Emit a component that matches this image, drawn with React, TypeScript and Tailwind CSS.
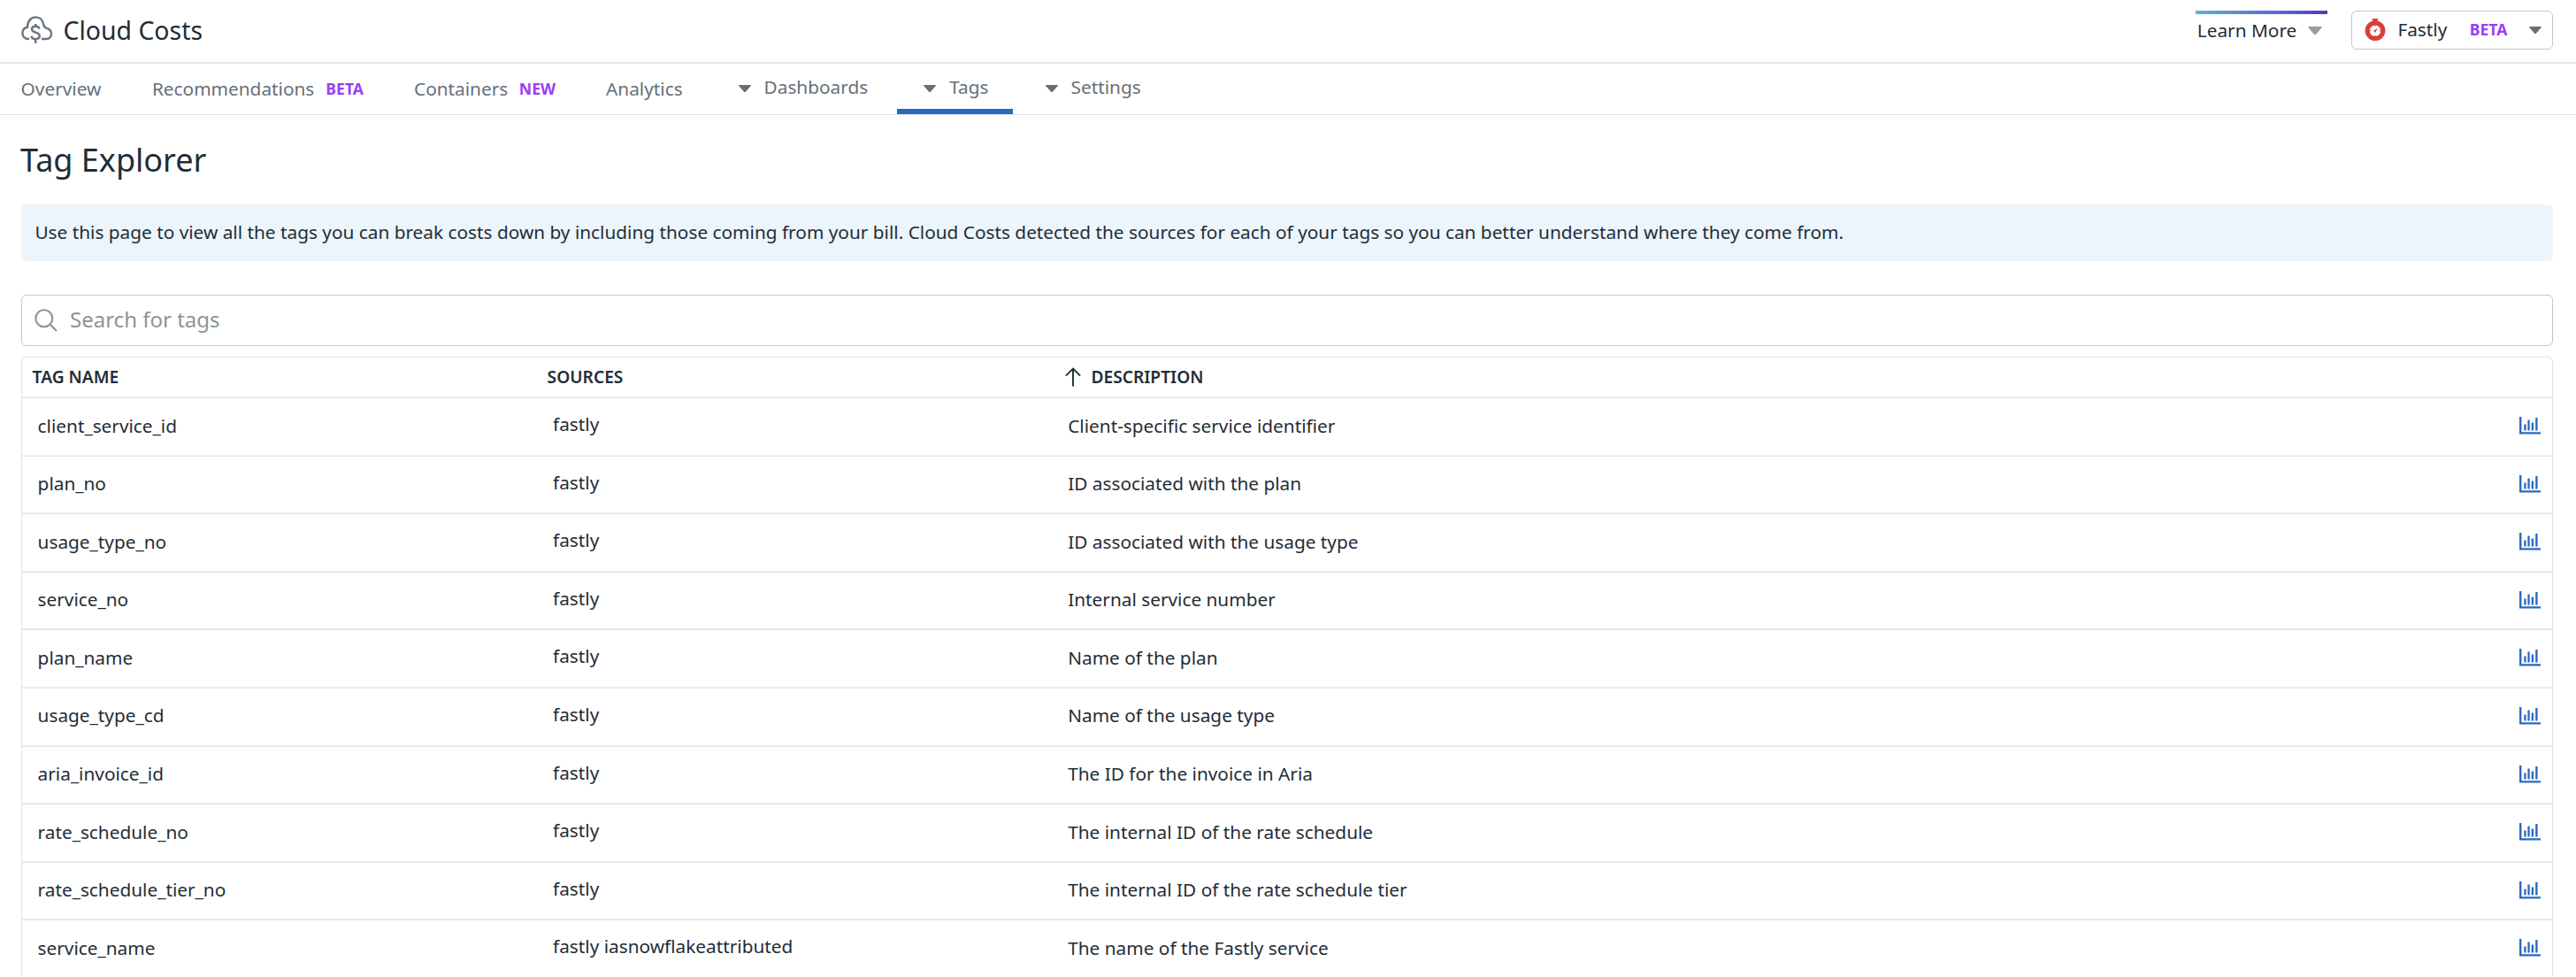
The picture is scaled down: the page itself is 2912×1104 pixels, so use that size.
import type { ReactNode } from "react";

type Tag = { name: string; sources: string; description: string };

const TAGS: Tag[] = [
  { name: "client_service_id", sources: "fastly", description: "Client-specific service identifier" },
  { name: "plan_no", sources: "fastly", description: "ID associated with the plan" },
  { name: "usage_type_no", sources: "fastly", description: "ID associated with the usage type" },
  { name: "service_no", sources: "fastly", description: "Internal service number" },
  { name: "plan_name", sources: "fastly", description: "Name of the plan" },
  { name: "usage_type_cd", sources: "fastly", description: "Name of the usage type" },
  { name: "aria_invoice_id", sources: "fastly", description: "The ID for the invoice in Aria" },
  { name: "rate_schedule_no", sources: "fastly", description: "The internal ID of the rate schedule" },
  { name: "rate_schedule_tier_no", sources: "fastly", description: "The internal ID of the rate schedule tier" },
  { name: "service_name", sources: "fastly iasnowflakeattributed", description: "The name of the Fastly service" },
];

function CloudCostIcon() {
  return (
    <svg className="h-8 w-9" viewBox="0 0 36 32" fill="none" stroke="#6c757d" strokeWidth="2.4">
      <path d="M9 26H8.2C4.2 26 1.4 23.2 1.4 19.4C1.4 16 3.8 13.4 7 12.8C7 6.2 10.8 1.4 16.2 1.4C21.2 1.4 24.4 4.8 25 9.6C25.6 11.8 26.8 13.2 28.6 13.8C32 14.6 34 17 34 20C34 23.6 31.6 26 28.4 26H23" />
      <path d="M20.6 14.6C20 12.8 18.4 11.8 16.2 11.8C13.6 11.8 12 13 12 15C12 17 13.4 17.8 16.2 18.6C19.2 19.4 20.8 20.4 20.8 22.6C20.8 24.8 18.8 26.2 16.2 26.2C13.6 26.2 11.8 25 11.4 22.8" />
      <path d="M16.2 9V12.4M16.2 26V31" />
    </svg>
  );
}

function Caret({ className }: { className: string }) {
  return (
    <svg className={className} viewBox="0 0 14 9" preserveAspectRatio="none">
      <path d="M0.8 0H13.2Q14.3 0.2 13.6 1.2L7.9 8.2Q7 9.1 6.1 8.2L0.4 1.2Q-0.3 0.2 0.8 0Z" fill="currentColor" />
    </svg>
  );
}

function StopwatchIcon() {
  return (
    <svg className="mt-[-1px] h-[25px] w-6" viewBox="0 0 24 25">
      <path d="M8.6 0H15.2V1.4H14.4V5H9.4V1.4H8.6Z" fill="#d64036" />
      <circle cx="12" cy="13.6" r="11.4" fill="#d64036" />
      <circle cx="12" cy="13.8" r="6.2" fill="#fff" />
      <path d="M12 7.4V9M12 18.8V20.2M5.6 13.8H7.2M16.8 13.8H18.4" stroke="#d64036" strokeWidth="0.9" />
      <path d="M14.8 10.8L12.8 14.6A1.2 1.2 0 1 1 11.2 13Z" fill="#d64036" />
    </svg>
  );
}

function SearchIcon() {
  return (
    <svg className="mt-[-1px] h-[26px] w-[26px]" viewBox="0 0 26 26" fill="none" stroke="#8d9399" strokeWidth="2.1">
      <circle cx="10.8" cy="10.8" r="9.5" />
      <path d="M17.4 17.4L25 25" />
    </svg>
  );
}

function ArrowUp() {
  return (
    <svg className="mt-[-1px] h-[22px] w-[18px]" viewBox="0 0 18 22" fill="none" stroke="#1f2d37" strokeWidth="1.9">
      <path d="M9 21.4V1.6M0.9 9.6L9 1.5L17.1 9.6" />
    </svg>
  );
}

function ChartIcon() {
  return (
    <svg className="mt-px h-5 w-6" viewBox="0 0 24 20" fill="#2b68c0">
      <path d="M0 0H2.4V17.2H24V19.6H0Z" />
      <path d="M5.3 8.4H7.6V15.4H5.3ZM9.4 3.4H11.7V15.4H9.4ZM13.7 6.6H16V15.4H13.7ZM18.2 1H20.6V15.4H18.2Z" />
    </svg>
  );
}

function Badge({ children }: { children: ReactNode }) {
  return <span className="text-[17.6px] font-bold text-[#9a3df5]">{children}</span>;
}

function NavMenu({ label, active, className }: { label: string; active?: boolean; className: string }) {
  return (
    <a
      className={`flex h-full items-center border-b-6 ${active ? "border-[#2b68c0]" : "border-transparent"} ${className}`}
    >
      <Caret className="mt-[5px] mr-[15px] h-[8.5px] w-3.5" />
      <span className="mt-px">{label}</span>
    </a>
  );
}

export default function App() {
  return (
    <div className="h-[1104px] overflow-hidden bg-white font-['Noto_Sans',sans-serif] text-[20.8px] leading-8 text-[#1f2d37]">
      <header className="flex h-18 items-center border-b-2 border-[#e0e4ea] pr-[26px] pl-6">
        <span className="mt-[-2px]">
          <CloudCostIcon />
        </span>
        <span className="mt-[-2px] ml-[11.6px] text-[28.4px]">Cloud Costs</span>

        <div className="mt-[-2px] ml-auto flex h-11 items-start">
          <div className="w-[149px]">
            <div className="h-1 bg-linear-to-r from-[#5eb0dc] to-[#5433c4]" />
            <div className="flex h-[35px] items-center pl-[1.8px]">
              <span>Learn More</span>
              <Caret className="mt-[3px] ml-[12.7px] h-[9.5px] w-4 text-[#979da3]" />
            </div>
          </div>
          <div className="ml-[27px] flex h-11 w-[228px] items-center rounded-md border border-[#c2c5da] pl-3.5">
            <StopwatchIcon />
            <span className="mt-[-3px] ml-[13.4px]">Fastly</span>
            <span className="mt-[-4px] ml-[25.5px]">
              <Badge>BETA</Badge>
            </span>
            <Caret className="ml-[25px] h-[8.5px] w-3.5 text-[#66717a]" />
          </div>
        </div>
      </header>

      <nav className="flex h-[58px] items-center border-b border-[#dfe2e8] pl-[23.6px] text-[#66707a]">
        <a className="mt-[-2px]">Overview</a>
        <a className="mt-[-2px] ml-[57.6px] flex items-center gap-[13px]">
          Recommendations <Badge>BETA</Badge>
        </a>
        <a className="mt-[-2px] ml-[57px] flex items-center gap-[12.6px]">
          Containers <Badge>NEW</Badge>
        </a>
        <a className="mt-[-2px] ml-[57px]">Analytics</a>
        <NavMenu label="Dashboards" className="ml-[62.9px]" />
        <NavMenu label="Tags" active className="ml-[33px] pr-[27px] pl-[30px]" />
        <NavMenu label="Settings" className="ml-[37px]" />
      </nav>

      <main className="pr-[26px] pl-6">
        <h1 className="-ml-px pt-[27px] text-[36px] leading-[48px]">Tag Explorer</h1>

        <div className="mt-[26px] flex h-16 items-center rounded-md bg-[#ecf5fc] pb-[3px] pl-[15.4px]">
          Use this page to view all the tags you can break costs down by including those coming from your bill. Cloud
          Costs detected the sources for each of your tags so you can better understand where they come from.
        </div>

        <div className="mt-[38px] flex h-[58px] items-center rounded-md border border-[#c2c5da] pl-3.5 text-2xl text-[#8d9399]">
          <SearchIcon />
          <span className="mt-[-2px] ml-[14px]">Search for tags</span>
        </div>

        <div className="mt-3 h-[720px] rounded-t-md border border-b-0 border-[#e0e3ea]">
          <div className="grid h-[46px] grid-cols-[582px_582px_1fr] items-center border-b border-[#e0e3ec] pb-px pl-[11.6px] text-[19.2px] font-semibold shadow-[inset_0_-1px_#eff0f5]">
            <span>TAG NAME</span>
            <span>SOURCES</span>
            <span className="flex items-center pl-[3px]">
              <ArrowUp />
              <span className="ml-[11.8px]">DESCRIPTION</span>
            </span>
          </div>
          {TAGS.map((tag) => (
            <div
              key={tag.name}
              className="grid h-[65.6px] grid-cols-[582.4px_582.2px_1fr_auto] items-center border-b border-[#e0e3ec] pr-[13px] pb-[3.6px] pl-[17.6px] shadow-[inset_0_-1px_#eff0f5]"
            >
              <span>{tag.name}</span>
              <span className="mt-[-3px]">{tag.sources}</span>
              <span>{tag.description}</span>
              <ChartIcon />
            </div>
          ))}
        </div>
      </main>
    </div>
  );
}
